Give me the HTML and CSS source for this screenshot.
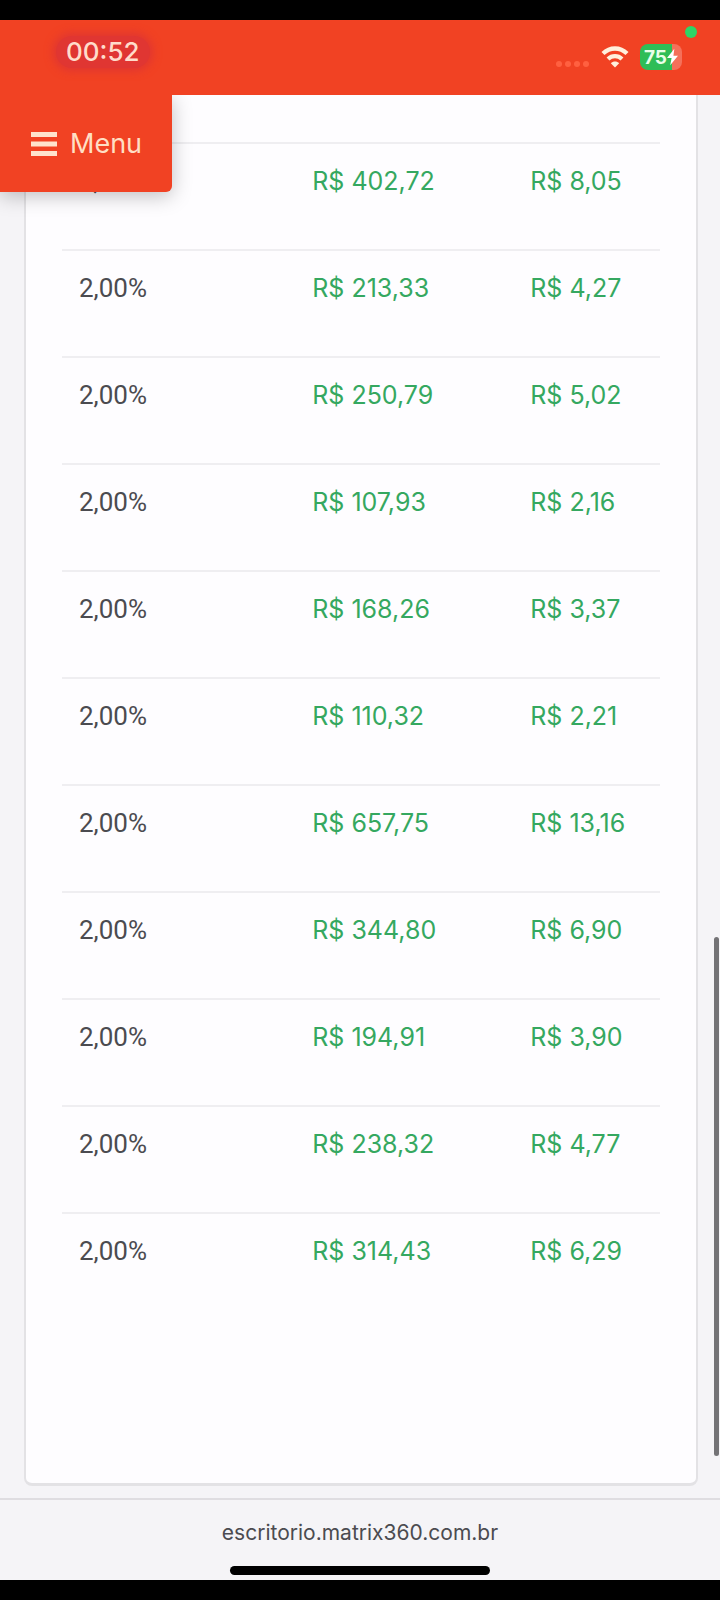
FILE: index.html
```html
<!DOCTYPE html>
<html lang="pt-BR">
<head>
  <meta charset="UTF-8">
  <meta name="viewport" content="width=device-width, initial-scale=1">
  <title>Escritório Matrix360</title>
  <link rel="stylesheet" href="styles.css">
</head>
<body>
  <header class="status-bar">
    <span class="time">00:52</span>
    <div class="status-icons">
      <svg class="signal" viewBox="0 0 34 6" aria-hidden="true">
        <circle cx="3" cy="3" r="3"/>
        <circle cx="12" cy="3" r="3"/>
        <circle cx="21" cy="3" r="3"/>
        <circle cx="30" cy="3" r="3"/>
      </svg>
      <svg class="wifi" viewBox="0 0 28 22" aria-hidden="true">
        <path d="M2 7.5C9 .8 19 .8 26 7.5" stroke-width="4.4"/>
        <path d="M7 13C11 9.2 17 9.2 21 13" stroke-width="4.2"/>
        <path class="wifi-dot" d="M14 21.5L9.8 17.2C12 14.8 16 14.8 18.2 17.2Z"/>
      </svg>
      <div class="battery">
        <span>75</span>
        <svg class="bolt" viewBox="0 0 12 18" aria-hidden="true">
          <path d="M8 0L0 10H5L3.5 18L12 7.5H7Z"/>
        </svg>
      </div>
    </div>
    <span class="recording"></span>
  </header>

  <main class="page">
    <button class="menu" type="button">
      <svg viewBox="0 0 26 24" aria-hidden="true">
        <path d="M0 2.5H26M0 12H26M0 21.5H26"/>
      </svg>
      Menu
    </button>
    <div class="card">
      <table class="bonus">
        <tbody>
          <tr><td>2,00%</td><td class="valor">R$ 402,72</td><td class="valor">R$ 8,05</td></tr>
          <tr><td>2,00%</td><td class="valor">R$ 213,33</td><td class="valor">R$ 4,27</td></tr>
          <tr><td>2,00%</td><td class="valor">R$ 250,79</td><td class="valor">R$ 5,02</td></tr>
          <tr><td>2,00%</td><td class="valor">R$ 107,93</td><td class="valor">R$ 2,16</td></tr>
          <tr><td>2,00%</td><td class="valor">R$ 168,26</td><td class="valor">R$ 3,37</td></tr>
          <tr><td>2,00%</td><td class="valor">R$ 110,32</td><td class="valor">R$ 2,21</td></tr>
          <tr><td>2,00%</td><td class="valor">R$ 657,75</td><td class="valor">R$ 13,16</td></tr>
          <tr><td>2,00%</td><td class="valor">R$ 344,80</td><td class="valor">R$ 6,90</td></tr>
          <tr><td>2,00%</td><td class="valor">R$ 194,91</td><td class="valor">R$ 3,90</td></tr>
          <tr><td>2,00%</td><td class="valor">R$ 238,32</td><td class="valor">R$ 4,77</td></tr>
          <tr><td>2,00%</td><td class="valor">R$ 314,43</td><td class="valor">R$ 6,29</td></tr>
        </tbody>
      </table>
    </div>
    <div class="scrollbar"></div>
  </main>

  <footer class="toolbar">
    <span>escritorio.matrix360.com.br</span>
    <div class="home-bar"></div>
  </footer>
</body>
</html>
```

FILE: styles.css
```css
* {
  box-sizing: border-box;
}
body {
  margin: 0;
  min-height: 100vh;
  display: flex;
  flex-direction: column;
  border-top: 20px solid #000;
  border-bottom: 20px solid #000;
  background-color: #f5f4f7;
  color: #4b4b50;
  font-family: Inter, "Liberation Sans", sans-serif;
  font-size: 25px;
}

/* barra de status */
.status-bar {
  position: relative;
  display: flex;
  justify-content: space-between;
  align-items: flex-start;
  height: 75px;
  padding: 16px 38px 0 56px;
  background-color: #f14223;
}
.time {
  padding: 0 10px;
  border-radius: 16px;
  background-color: #e03632;
  box-shadow: 0 0 8px 3px #e03632;
  color: #ffdccb;
  font-size: 26px;
  font-weight: 500;
  line-height: 32px;
}
.status-icons {
  display: flex;
  align-items: center;
  gap: 11px;
  padding-top: 8px;
}
.signal {
  width: 34px;
  height: 6px;
  margin-top: 14px;
  fill: #ff6040;
}
.wifi {
  width: 28px;
  height: 22px;
  fill: none;
  stroke: #fff0dc;
}
.wifi .wifi-dot {
  fill: #fff0dc;
  stroke: none;
}
.battery {
  display: flex;
  align-items: center;
  justify-content: center;
  width: 42px;
  height: 26px;
  border-radius: 8px;
  background: linear-gradient(to right, #2fbd57 76%, #f5705a 76%);
  color: #e9ffe9;
  font-size: 19px;
  font-weight: 700;
}
.bolt {
  width: 11px;
  height: 18px;
  fill: #fff;
}
.recording {
  position: absolute;
  top: 6px;
  right: 23px;
  width: 12px;
  height: 12px;
  border-radius: 50%;
  background-color: #2fd566;
}

/* conteudo */
.page {
  position: relative;
  flex: 1;
  display: flex;
  padding: 0 22px 12px 24px;
}
.menu {
  position: absolute;
  top: 0;
  left: 0;
  display: flex;
  align-items: center;
  gap: 13px;
  height: 97px;
  padding: 0 30px 0 31px;
  border: none;
  border-radius: 0 0 6px 0;
  background-color: #f14223;
  box-shadow: 0 4px 20px rgba(0, 0, 0, 0.25);
  clip-path: inset(0 -40px -40px 0);
  color: #ffdfc4;
  font-family: inherit;
  font-size: 27px;
  cursor: pointer;
}
.menu svg {
  width: 26px;
  height: 24px;
  stroke: #ffe3cc;
  stroke-width: 5;
}
.card {
  flex: 1;
  padding: 47px 36px 100px;
  border: 2px solid #e3e2e5;
  border-top: none;
  border-bottom-width: 3px;
  border-radius: 0 0 8px 8px;
  background-color: #fefdff;
}
.bonus {
  width: 100%;
  table-layout: fixed;
  border-collapse: collapse;
}
.bonus td {
  height: 107px;
  padding: 21px 0 0 17px;
  border-top: 2px solid #efeef1;
  line-height: 32px;
  vertical-align: top;
}
.bonus td:first-child {
  width: 39%;
  font-family: Roboto, "Liberation Sans", sans-serif;
  font-size: 26px;
}
.bonus td:nth-child(2) {
  width: 218px;
}
.bonus .valor {
  color: #35a860;
}
.scrollbar {
  position: absolute;
  top: 60%;
  right: 1px;
  width: 5px;
  height: 37%;
  border-radius: 3px;
  background-color: #747376;
}

/* barra do navegador */
.toolbar {
  display: flex;
  flex-direction: column;
  align-items: center;
  gap: 20px;
  padding: 20px 0 5px;
  border-top: 2px solid #dfdde1;
  font-size: 21px;
  line-height: 26px;
}
.home-bar {
  width: 36%;
  height: 9px;
  border-radius: 5px;
  background-color: #000;
}
```
